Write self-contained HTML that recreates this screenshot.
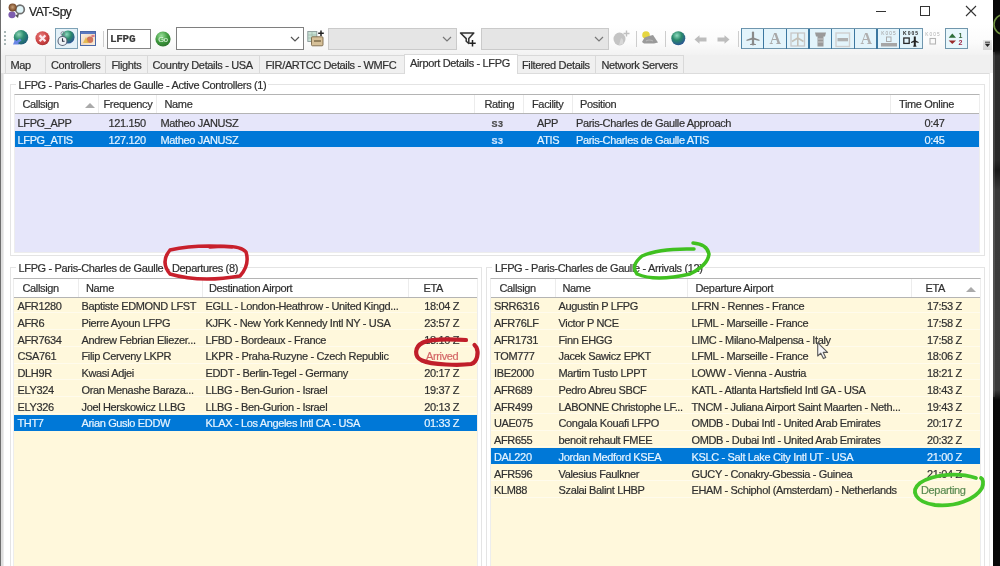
<!DOCTYPE html><html><head><meta charset="utf-8"><style>

*{box-sizing:border-box}
html,body{margin:0;padding:0}
body{width:1000px;height:566px;overflow:hidden;position:relative;background:#fff;font-family:"Liberation Sans", sans-serif;font-size:11px;color:#303030;letter-spacing:-0.35px}
.ab{position:absolute}
.t{position:absolute;white-space:nowrap;line-height:13px;-webkit-text-stroke:0.2px currentColor}
.tab{position:absolute;top:55px;height:18px;background:#f0f0f0;border:1px solid #d9d9d9;border-bottom:none}
.tabsel{position:absolute;top:54px;height:20px;background:#fff;border:1px solid #d9d9d9;border-bottom:none}
.grp{position:absolute;border:1px solid #e4e4e4}
.lv{position:absolute;border:1px solid #ededed;border-top-color:#b4b4b4;overflow:hidden}
.hdr{position:absolute;left:0;top:0;right:0;height:19px;background:#fff;border-bottom:1px solid #b4b4b4}
.sep{position:absolute;top:0;height:18px;width:1px;background:#ececec}
.row{position:absolute;left:0;right:0;height:16px}
.sel{background:#0078d7;color:#e6f4ff}
.tbtn{position:absolute;top:28px;width:23px;height:21px;border:2px solid #4a8ab3;background:#e3f2fa}

</style></head><body><div style="position:absolute;left:0;top:0;width:1000px;height:566px;overflow:hidden;filter:blur(0.4px)">
<div class="ab" style="left:0;top:0;width:1px;height:566px;background:#6e6e6e"></div><div class="ab" style="left:1px;top:24px;width:1.5px;height:542px;background:#dedede"></div>
<div class="ab" style="left:993px;top:0;width:7px;height:566px;background:linear-gradient(#070707 0,#0a0a0a 50px,#2c2c2c 56px,#2a2a2a 160px,#1a1a1a 170px,#3a3a3a 190px,#3c3c3c 390px,#0a0a0a 400px,#080808 566px)"></div>
<div class="ab" style="left:993px;top:52px;width:1.5px;height:345px;background:rgba(255,255,255,0.12)"></div>
<svg class="ab" style="left:993px;top:0" width="7" height="60" viewBox="0 0 7 60"><circle cx="11" cy="24.5" r="10" fill="none" stroke="#6f9040" stroke-width="1.6"/></svg>
<div class="t" style="left:29px;top:5px;font-size:12px;letter-spacing:-0.45px;color:#222;line-height:14px">VAT-Spy</div>
<svg class="ab" style="left:6px;top:2px" width="20" height="18" viewBox="0 0 20 18"><defs><radialGradient id="hd" cx="50%" cy="45%" r="55%"><stop offset="0" stop-color="#c8a078"/><stop offset="1" stop-color="#6a3a1a"/></radialGradient></defs><circle cx="14" cy="7.4" r="4.3" fill="#e0f4f8" stroke="#707070" stroke-width="1.7"/><path d="M9 13.5L13 11.5L12 16Z" fill="#555"/><ellipse cx="6" cy="12.8" rx="3.6" ry="3.4" fill="#7c5cae"/><circle cx="6.6" cy="5.6" r="4" fill="url(#hd)"/></svg>
<div class="ab" style="left:876px;top:11px;width:10px;height:1px;background:#333"></div>
<div class="ab" style="left:920px;top:6px;width:10px;height:10px;border:1px solid #333"></div>
<svg class="ab" style="left:965px;top:5px" width="12" height="12" viewBox="0 0 12 12"><path d="M1 1L11 11M11 1L1 11" stroke="#333" stroke-width="1.1"/></svg>
<div class="ab" style="left:1px;top:24px;width:992px;height:31px;background:linear-gradient(#fff,#fbfbfb 60%,#f2f2f2)"></div>
<div class="ab" style="left:3.5px;top:31px;width:2px;height:2px;background:#a9b6b6"></div>
<div class="ab" style="left:3.5px;top:35px;width:2px;height:2px;background:#a9b6b6"></div>
<div class="ab" style="left:3.5px;top:39px;width:2px;height:2px;background:#a9b6b6"></div>
<div class="ab" style="left:3.5px;top:43px;width:2px;height:2px;background:#a9b6b6"></div>
<svg class="ab" style="left:0;top:0" width="0" height="0"><defs>
<radialGradient id="gg" cx="35%" cy="30%" r="75%"><stop offset="0" stop-color="#8fd6b6"/><stop offset=".45" stop-color="#2f8f72"/><stop offset="1" stop-color="#1d5a78"/></radialGradient>
<radialGradient id="gb" cx="40%" cy="30%" r="75%"><stop offset="0" stop-color="#8fdcc0"/><stop offset=".45" stop-color="#2a8a6a"/><stop offset="1" stop-color="#2a4e98"/></radialGradient>
<radialGradient id="rg" cx="40%" cy="35%" r="70%"><stop offset="0" stop-color="#e88080"/><stop offset=".6" stop-color="#d04848"/><stop offset="1" stop-color="#a83030"/></radialGradient>
<radialGradient id="gn" cx="40%" cy="30%" r="75%"><stop offset="0" stop-color="#9ae09a"/><stop offset=".55" stop-color="#3f9a3f"/><stop offset="1" stop-color="#2a702a"/></radialGradient>
<linearGradient id="pic" x1="0" y1="0" x2="1" y2="1"><stop offset="0" stop-color="#fbf6ee"/><stop offset=".5" stop-color="#f0d8c0"/><stop offset="1" stop-color="#f8f0e0"/></linearGradient>
</defs></svg>
<svg class="ab" style="left:12px;top:29px" width="18" height="18" viewBox="0 0 18 18"><circle cx="9" cy="8.3" r="7.2" fill="url(#gg)"/><path d="M1 15.5L3 10.5L4.5 12L8 9.5L9.5 11.5L6 14L7.5 15.5Z" fill="#6a86e6"/></svg>
<svg class="ab" style="left:35px;top:31px" width="15" height="15" viewBox="0 0 15 15"><circle cx="7.5" cy="7.3" r="7" fill="url(#rg)"/><path d="M4.6 4.4L10.4 10.2M10.4 4.4L4.6 10.2" stroke="#fde8ec" stroke-width="2.2"/></svg>
<div class="ab" style="left:54.5px;top:28px;width:23px;height:21px;border:1.5px solid #7ea2b6;background:#e4f1f8"></div>
<svg class="ab" style="left:57px;top:30px" width="18" height="17" viewBox="0 0 18 17"><circle cx="11" cy="7" r="6.6" fill="url(#gb)"/><circle cx="5.5" cy="11" r="4.5" fill="#eef2f6" stroke="#5a6478" stroke-width="1.1"/><path d="M5.5 8.3V11.2H7.6" stroke="#2a3040" stroke-width="1.1" fill="none"/><circle cx="5.8" cy="3.5" r="1.8" fill="none" stroke="#7a8290" stroke-width=".9"/></svg>
<svg class="ab" style="left:80px;top:31px" width="16" height="15" viewBox="0 0 16 15"><rect x=".5" y=".5" width="15" height="14" fill="url(#pic)" stroke="#4a68a8"/><rect x="1" y="1" width="14" height="2" fill="#5a78c0"/><circle cx="10" cy="8.8" r="3.2" fill="#c85a40" opacity=".8"/><path d="M3 12L6 6L9 12Z" fill="#e0b030" opacity=".75"/><rect x="11.5" y="4" width="3" height="2" fill="#d04060" opacity=".6"/></svg>
<div class="ab" style="left:103px;top:31px;width:1px;height:16px;background:#cdcdcd"></div>
<div class="ab" style="left:636px;top:31px;width:1px;height:16px;background:#cdcdcd"></div>
<div class="ab" style="left:664.5px;top:31px;width:1px;height:16px;background:#cdcdcd"></div>
<div class="ab" style="left:738px;top:31px;width:1px;height:16px;background:#cdcdcd"></div>
<div class="ab" style="left:107px;top:29px;width:44px;height:20px;border:1.5px solid #858585;background:#fff"></div>
<div class="t" style="left:110px;top:33px;font-family:'Liberation Mono',monospace;font-weight:bold;font-size:11px;letter-spacing:-0.3px;color:#3a3a3a">LFPG</div>
<svg class="ab" style="left:155px;top:31px" width="16" height="16" viewBox="0 0 16 16"><circle cx="8" cy="8" r="7.6" fill="url(#gn)"/><text x="8" y="10.8" font-size="7.5" text-anchor="middle" fill="#f4fff4" font-family="Liberation Sans">Go</text></svg>
<div class="ab" style="left:176px;top:27px;width:128px;height:23px;border:1.5px solid #7f7f7f;background:#fff"></div>
<svg class="ab" style="left:290px;top:36px" width="10" height="6" viewBox="0 0 10 6"><path d="M1 1L5 5L9 1" stroke="#555" stroke-width="1.2" fill="none"/></svg>
<svg class="ab" style="left:307px;top:30px" width="17" height="17" viewBox="0 0 17 17"><rect x=".8" y="1.5" width="9" height="10" fill="#c8e0d4" stroke="#8a9a9a" stroke-width=".9"/><path d="M1 5H9.5M1 8H9.5M5 1.5V11.5" stroke="#9ab8a8" stroke-width=".7"/><rect x="4.5" y="6.8" width="11.5" height="9" rx="1" fill="#d6c098" stroke="#7a6848" stroke-width=".9"/><path d="M7 11H14" stroke="#6a5838" stroke-width="1.2"/><path d="M14 0.5V6M11.2 3.2H16.8" stroke="#222" stroke-width="1.5"/></svg>
<div class="ab" style="left:328px;top:27.5px;width:129px;height:22.5px;border:1.5px solid #cacaca;background:#e5e5e5"></div>
<svg class="ab" style="left:442px;top:36px" width="10" height="6" viewBox="0 0 10 6"><path d="M1 1L5 5L9 1" stroke="#787878" stroke-width="1.2" fill="none"/></svg>
<svg class="ab" style="left:459px;top:31px" width="17" height="16" viewBox="0 0 17 16"><path d="M1.5 2H14.8L9.8 7.6V12.5L7.2 10.2V7.6Z" fill="#f4f4f4" stroke="#303030" stroke-width="1.5" stroke-linejoin="round"/><path d="M13.5 9V15.5M10.3 12.2H16.7" stroke="#202020" stroke-width="1.5"/></svg>
<div class="ab" style="left:481px;top:27.5px;width:128px;height:22.5px;border:1.5px solid #cacaca;background:#e5e5e5"></div>
<svg class="ab" style="left:594px;top:36px" width="10" height="6" viewBox="0 0 10 6"><path d="M1 1L5 5L9 1" stroke="#787878" stroke-width="1.2" fill="none"/></svg>
<svg class="ab" style="left:612px;top:30px" width="19" height="17" viewBox="0 0 19 17"><ellipse cx="7.5" cy="9" rx="6" ry="6.5" fill="#c4c4c4"/><path d="M9 8Q12 9 11 14L7 15Z" fill="#d8d8d8"/><path d="M14.5 0.5V6.5M11.5 3.5H17.5" stroke="#c0c0c0" stroke-width="1.4"/></svg>
<svg class="ab" style="left:641px;top:30px" width="18" height="16" viewBox="0 0 18 16"><circle cx="5" cy="5" r="3.8" fill="#e6d640"/><path d="M3.5 7.5L8 6L12 5L17 12.5L13 13.5H3L1 12Z" fill="#9a9a9a"/><path d="M5 11Q8 9 12 11" stroke="#b8b8b8" stroke-width="1.2" fill="none"/></svg>
<svg class="ab" style="left:671px;top:31px" width="15" height="15" viewBox="0 0 15 15"><circle cx="7.3" cy="7.3" r="7" fill="url(#gb)"/></svg>
<svg class="ab" style="left:694px;top:35px" width="14" height="9" viewBox="0 0 14 9"><path d="M0.5 4.5L5.5 0.3V2.5H12.5V6.5H5.5V8.7Z" fill="#bdbdbd"/></svg>
<svg class="ab" style="left:717px;top:35px" width="13" height="9" viewBox="0 0 13 9"><path d="M12.5 4.5L7.5 0.3V2.5H0.5V6.5H7.5V8.7Z" fill="#bdbdbd"/></svg>
<div class="ab" style="left:741px;top:28px;width:181.5px;height:21px;border:1.3px solid #6f96ae;border-left-color:#4f86a8;background:#e3f4fb"></div>
<div class="ab" style="left:762.8px;top:28.5px;width:1.6px;height:20px;background:#3b77a0"></div>
<div class="ab" style="left:785.5999999999999px;top:28.5px;width:1.6px;height:20px;background:#3b77a0"></div>
<div class="ab" style="left:808.4px;top:28.5px;width:1.6px;height:20px;background:#3b77a0"></div>
<div class="ab" style="left:830.9px;top:28.5px;width:1.6px;height:20px;background:#3b77a0"></div>
<div class="ab" style="left:853.5px;top:28.5px;width:1.6px;height:20px;background:#3b77a0"></div>
<div class="ab" style="left:876.3px;top:28.5px;width:1.6px;height:20px;background:#3b77a0"></div>
<div class="ab" style="left:898.8px;top:28.5px;width:1.6px;height:20px;background:#3b77a0"></div>
<svg class="ab" style="left:741.5px;top:28.5px" width="22" height="20" viewBox="0 0 22 20"><path d="M11 3.5V15.5" stroke="#8a8a8a" stroke-width="2.2" stroke-linecap="round"/><path d="M4.5 10.8L11 8.3L17.5 10.8V12L11 10.6L4.5 12Z" fill="#8a8a8a"/><path d="M8 15.2L11 14.2L14 15.2V16H8Z" fill="#8a8a8a"/></svg>
<svg class="ab" style="left:764.3px;top:28.5px" width="22" height="20" viewBox="0 0 22 20"><text x="11" y="15.2" font-size="16" text-anchor="middle" fill="#a8a8a8" font-family="Liberation Serif" font-weight="bold">A</text></svg>
<svg class="ab" style="left:787px;top:28.5px" width="22" height="20" viewBox="0 0 22 20"><rect x="4" y="4" width="13.5" height="13" fill="none" stroke="#c8c8c8" stroke-width="1.3"/><path d="M10.8 4V17M5 12.5L10.8 9L16.5 12.5" stroke="#c4c0b8" stroke-width="1.6" fill="none"/></svg>
<svg class="ab" style="left:809.8px;top:28.5px" width="22" height="20" viewBox="0 0 22 20"><path d="M5 3.5H16L15 7.5H13.5V17.5H7.5V7.5H6Z" fill="#9a9a9a"/><path d="M8 10H13M8 13H13" stroke="#c8c8c8" stroke-width="1"/></svg>
<svg class="ab" style="left:832.4px;top:28.5px" width="22" height="20" viewBox="0 0 22 20"><rect x="4" y="4" width="13.5" height="13.5" fill="none" stroke="#cfcfcf" stroke-width="1.4"/><rect x="5.5" y="9" width="10.5" height="3.3" fill="#b0b0b0"/></svg>
<svg class="ab" style="left:855px;top:28.5px" width="22" height="20" viewBox="0 0 22 20"><text x="11" y="15.2" font-size="16" text-anchor="middle" fill="#b0b0b0" font-family="Liberation Serif" font-weight="bold">A</text></svg>
<svg class="ab" style="left:877.8px;top:28.5px" width="22" height="20" viewBox="0 0 22 20"><text x="11" y="6" font-size="4.8" text-anchor="middle" fill="#a0a0a0" font-family="Liberation Sans" letter-spacing="1.1">K005</text><rect x="8.5" y="8" width="4.5" height="4.5" fill="none" stroke="#aaa" stroke-width="1"/><rect x="3" y="14" width="16" height="3.5" fill="#a6a6a6"/></svg>
<svg class="ab" style="left:900.3px;top:28.5px" width="22" height="20" viewBox="0 0 22 20"><text x="11" y="6.2" font-size="5" text-anchor="middle" fill="#252525" font-family="Liberation Sans" font-weight="bold" letter-spacing="1">K005</text><rect x="3.8" y="9" width="5.4" height="5.4" fill="none" stroke="#2a2a2a" stroke-width="1.3"/><path d="M14.8 7.5V17.5" stroke="#222" stroke-width="2"/><path d="M11 13L14.8 11L18.6 13V14L14.8 13L11 14Z" fill="#222"/><path d="M13 17L14.8 16L16.6 17V17.6H13Z" fill="#222"/></svg>
<svg class="ab" style="left:922px;top:28.5px" width="22" height="20" viewBox="0 0 22 20"><text x="11" y="7" font-size="4.8" text-anchor="middle" fill="#b0b0b0" font-family="Liberation Sans" letter-spacing="1.1">K005</text><rect x="8" y="9.5" width="5.5" height="5.5" fill="none" stroke="#b4b4b4" stroke-width="1.1"/></svg>
<div class="ab" style="left:945px;top:28px;width:23px;height:21.3px;border:1.5px solid #7096ac;background:#e8f7fc"></div>
<svg class="ab" style="left:945px;top:28px" width="23" height="21" viewBox="0 0 23 21"><path d="M3.7 9.7L7.3 5.5L11 9.7Z" fill="#2e6e3a"/><path d="M3.7 12.5L7.3 16L11 12.5Z" fill="#9a2a2a"/><text x="15.2" y="9.8" font-size="7" text-anchor="middle" fill="#3a6a40" font-family="Liberation Sans" font-weight="bold">1</text><text x="15.2" y="17" font-size="7" text-anchor="middle" fill="#a02848" font-family="Liberation Sans" font-weight="bold">2</text></svg>
<div class="ab" style="left:983px;top:40px;width:9px;height:10px;background:linear-gradient(#e8e8e8,#d4d4d4)"></div>
<svg class="ab" style="left:983px;top:40px" width="9" height="10" viewBox="0 0 9 10"><path d="M2 2.2H7" stroke="#333" stroke-width="1"/><path d="M1.8 3.8H7.2L4.5 7Z" fill="#222"/></svg>
<div class="ab" style="left:1px;top:55px;width:992px;height:18px;background:#f0f0f0"></div>
<div class="tab" style="left:5px;width:41px"></div>
<div class="t" style="left:10.5px;top:59px">Map</div>
<div class="tab" style="left:45px;width:61px"></div>
<div class="t" style="left:51px;top:59px">Controllers</div>
<div class="tab" style="left:105px;width:42.5px"></div>
<div class="t" style="left:111.5px;top:59px">Flights</div>
<div class="tab" style="left:146.5px;width:113.5px"></div>
<div class="t" style="left:152.5px;top:59px">Country Details - USA</div>
<div class="tab" style="left:259px;width:146px"></div>
<div class="t" style="left:265.5px;top:59px">FIR/ARTCC Details - WMFC</div>
<div class="tab" style="left:517px;width:79px"></div>
<div class="t" style="left:522px;top:59px">Filtered Details</div>
<div class="tab" style="left:595px;width:89px"></div>
<div class="t" style="left:601.5px;top:59px">Network Servers</div>
<div class="ab" style="left:3px;top:73px;width:987px;height:500px;background:#fff;border:1px solid #ececec;border-top-color:#dcdcdc"></div>
<div class="tabsel" style="left:404px;width:114px"></div>
<div class="t" style="left:410px;top:57px">Airport Details - LFPG</div>
<div class="grp" style="left:10px;top:84px;width:975px;height:172px"></div>
<div class="t" style="left:15.5px;top:79px;background:#fff;padding:0 2px 0 3px">LFPG - Paris-Charles de Gaulle - Active Controllers (1)</div>
<div class="grp" style="left:10px;top:267px;width:472px;height:334px"></div>
<div class="t" style="left:15.5px;top:262px;background:#fff;padding:0 2px 0 3px">LFPG - Paris-Charles de Gaulle - Departures (8)</div>
<div class="grp" style="left:486px;top:267px;width:499px;height:334px"></div>
<div class="t" style="left:492px;top:262px;background:#fff;padding:0 2px 0 3px">LFPG - Paris-Charles de Gaulle - Arrivals (12)</div>
<div class="lv" style="left:14px;top:94px;width:966px;height:159px;background:#e6e6fa">
<div class="hdr">
<div class="t" style="left:7.5px;top:3.4px">Callsign</div>
<div class="sep" style="left:82.5px"></div>
<div class="t" style="left:88.5px;top:3.4px">Frequency</div>
<div class="sep" style="left:141px"></div>
<div class="t" style="left:149.5px;top:3.4px">Name</div>
<div class="sep" style="left:459px"></div>
<div class="t" style="left:469.5px;top:3.4px">Rating</div>
<div class="sep" style="left:508px"></div>
<div class="t" style="left:517px;top:3.4px">Facility</div>
<div class="sep" style="left:557px"></div>
<div class="t" style="left:565px;top:3.4px">Position</div>
<div class="sep" style="left:874.5px"></div>
<div class="t" style="left:884px;top:3.4px">Time Online</div>
<svg class="ab" style="left:70px;top:8px" width="10" height="5" viewBox="0 0 10 5"><path d="M0 5L5 0L10 5Z" fill="#aaa"/></svg>
</div>
<div class="row" style="top:19.00px;">
<div class="t" style="left:2.5px;top:2.8px;">LFPG_APP</div>
<div class="t" style="left:93.5px;top:2.8px;">121.150</div>
<div class="t" style="left:145.5px;top:2.8px;">Matheo JANUSZ</div>
<div class="t" style="left:476.5px;top:2.8px;font-size:9px;font-weight:bold;letter-spacing:0.6px;color:#4a4a4a;top:4.3px">S3</div>
<div class="t" style="left:522px;top:2.8px;">APP</div>
<div class="t" style="left:561px;top:2.8px;">Paris-Charles de Gaulle Approach</div>
<div class="t" style="left:909.5px;top:2.8px;">0:47</div>
</div>
<div class="row sel" style="top:35.75px;">
<div class="t" style="left:2.5px;top:2.8px;">LFPG_ATIS</div>
<div class="t" style="left:93.5px;top:2.8px;">127.120</div>
<div class="t" style="left:145.5px;top:2.8px;">Matheo JANUSZ</div>
<div class="t" style="left:476.5px;top:2.8px;font-size:9px;font-weight:bold;letter-spacing:0.6px;color:#cfe6ff;top:4.3px">S3</div>
<div class="t" style="left:522px;top:2.8px;">ATIS</div>
<div class="t" style="left:561px;top:2.8px;">Paris-Charles de Gaulle ATIS</div>
<div class="t" style="left:909.5px;top:2.8px;">0:45</div>
</div>
</div>
<div class="lv" style="left:13px;top:278px;width:465px;height:343px;background:#fff8dc">
<div class="hdr">
<div class="t" style="left:8.5px;top:3.4px">Callsign</div>
<div class="sep" style="left:63.5px"></div>
<div class="t" style="left:72px;top:3.4px">Name</div>
<div class="sep" style="left:187.5px"></div>
<div class="t" style="left:195px;top:3.4px">Destination Airport</div>
<div class="sep" style="left:393.5px"></div>
<div class="t" style="left:409.5px;top:3.4px">ETA</div>
</div>
<div class="row" style="top:18.40px;border-bottom:1px solid rgba(255,255,255,0.45);">
<div class="t" style="left:3.5px;top:2.8px;">AFR1280</div>
<div class="t" style="left:67.5px;top:2.8px;">Baptiste EDMOND LFST</div>
<div class="t" style="left:191.5px;top:2.8px;">EGLL - London-Heathrow - United Kingd...</div>
<div class="t" style="left:410.3px;top:2.8px;">18:04 Z</div>
</div>
<div class="row" style="top:35.15px;border-bottom:1px solid rgba(255,255,255,0.45);">
<div class="t" style="left:3.5px;top:2.8px;">AFR6</div>
<div class="t" style="left:67.5px;top:2.8px;">Pierre Ayoun LFPG</div>
<div class="t" style="left:191.5px;top:2.8px;">KJFK - New York Kennedy Intl NY - USA</div>
<div class="t" style="left:410.3px;top:2.8px;">23:57 Z</div>
</div>
<div class="row" style="top:51.90px;border-bottom:1px solid rgba(255,255,255,0.45);">
<div class="t" style="left:3.5px;top:2.8px;">AFR7634</div>
<div class="t" style="left:67.5px;top:2.8px;">Andrew Febrian Eliezer...</div>
<div class="t" style="left:191.5px;top:2.8px;">LFBD - Bordeaux - France</div>
<div class="t" style="left:410.3px;top:2.8px;">18:10 Z</div>
</div>
<div class="row" style="top:68.65px;border-bottom:1px solid rgba(255,255,255,0.45);">
<div class="t" style="left:3.5px;top:2.8px;">CSA761</div>
<div class="t" style="left:67.5px;top:2.8px;">Filip Cerveny LKPR</div>
<div class="t" style="left:191.5px;top:2.8px;">LKPR - Praha-Ruzyne - Czech Republic</div>
<div class="t" style="left:410.3px;top:2.8px;color:#d46868;left:412px">Arrived</div>
</div>
<div class="row" style="top:85.40px;border-bottom:1px solid rgba(255,255,255,0.45);">
<div class="t" style="left:3.5px;top:2.8px;">DLH9R</div>
<div class="t" style="left:67.5px;top:2.8px;">Kwasi Adjei</div>
<div class="t" style="left:191.5px;top:2.8px;">EDDT - Berlin-Tegel - Germany</div>
<div class="t" style="left:410.3px;top:2.8px;">20:17 Z</div>
</div>
<div class="row" style="top:102.15px;border-bottom:1px solid rgba(255,255,255,0.45);">
<div class="t" style="left:3.5px;top:2.8px;">ELY324</div>
<div class="t" style="left:67.5px;top:2.8px;">Oran Menashe Baraza...</div>
<div class="t" style="left:191.5px;top:2.8px;">LLBG - Ben-Gurion - Israel</div>
<div class="t" style="left:410.3px;top:2.8px;">19:37 Z</div>
</div>
<div class="row" style="top:118.90px;border-bottom:1px solid rgba(255,255,255,0.45);">
<div class="t" style="left:3.5px;top:2.8px;">ELY326</div>
<div class="t" style="left:67.5px;top:2.8px;">Joel Herskowicz LLBG</div>
<div class="t" style="left:191.5px;top:2.8px;">LLBG - Ben-Gurion - Israel</div>
<div class="t" style="left:410.3px;top:2.8px;">20:13 Z</div>
</div>
<div class="row sel" style="top:135.65px;">
<div class="t" style="left:3.5px;top:2.8px;">THT7</div>
<div class="t" style="left:67.5px;top:2.8px;">Arian Guslo EDDW</div>
<div class="t" style="left:191.5px;top:2.8px;">KLAX - Los Angeles Intl CA - USA</div>
<div class="t" style="left:410.3px;top:2.8px;">01:33 Z</div>
</div>
</div>
<div class="lv" style="left:490px;top:278px;width:491px;height:343px;background:#fff8dc">
<div class="hdr">
<div class="t" style="left:8.5px;top:3.4px">Callsign</div>
<div class="sep" style="left:63.5px"></div>
<div class="t" style="left:71.5px;top:3.4px">Name</div>
<div class="sep" style="left:196px"></div>
<div class="t" style="left:204.5px;top:3.4px">Departure Airport</div>
<div class="sep" style="left:420px"></div>
<div class="t" style="left:434.5px;top:3.4px">ETA</div>
<svg class="ab" style="left:475px;top:8px" width="10" height="5" viewBox="0 0 10 5"><path d="M0 5L5 0L10 5Z" fill="#aaa"/></svg>
</div>
<div class="row" style="top:18.40px;border-bottom:1px solid rgba(255,255,255,0.45);">
<div class="t" style="left:3px;top:2.8px;">SRR6316</div>
<div class="t" style="left:67.5px;top:2.8px;">Augustin P LFPG</div>
<div class="t" style="left:200.5px;top:2.8px;">LFRN - Rennes - France</div>
<div class="t" style="left:436px;top:2.8px;">17:53 Z</div>
</div>
<div class="row" style="top:35.15px;border-bottom:1px solid rgba(255,255,255,0.45);">
<div class="t" style="left:3px;top:2.8px;">AFR76LF</div>
<div class="t" style="left:67.5px;top:2.8px;">Victor P NCE</div>
<div class="t" style="left:200.5px;top:2.8px;">LFML - Marseille - France</div>
<div class="t" style="left:436px;top:2.8px;">17:58 Z</div>
</div>
<div class="row" style="top:51.90px;border-bottom:1px solid rgba(255,255,255,0.45);">
<div class="t" style="left:3px;top:2.8px;">AFR1731</div>
<div class="t" style="left:67.5px;top:2.8px;">Finn EHGG</div>
<div class="t" style="left:200.5px;top:2.8px;">LIMC - Milano-Malpensa - Italy</div>
<div class="t" style="left:436px;top:2.8px;">17:58 Z</div>
</div>
<div class="row" style="top:68.65px;border-bottom:1px solid rgba(255,255,255,0.45);">
<div class="t" style="left:3px;top:2.8px;">TOM777</div>
<div class="t" style="left:67.5px;top:2.8px;">Jacek Sawicz EPKT</div>
<div class="t" style="left:200.5px;top:2.8px;">LFML - Marseille - France</div>
<div class="t" style="left:436px;top:2.8px;">18:06 Z</div>
</div>
<div class="row" style="top:85.40px;border-bottom:1px solid rgba(255,255,255,0.45);">
<div class="t" style="left:3px;top:2.8px;">IBE2000</div>
<div class="t" style="left:67.5px;top:2.8px;">Martim Tusto LPPT</div>
<div class="t" style="left:200.5px;top:2.8px;">LOWW - Vienna - Austria</div>
<div class="t" style="left:436px;top:2.8px;">18:21 Z</div>
</div>
<div class="row" style="top:102.15px;border-bottom:1px solid rgba(255,255,255,0.45);">
<div class="t" style="left:3px;top:2.8px;">AFR689</div>
<div class="t" style="left:67.5px;top:2.8px;">Pedro Abreu SBCF</div>
<div class="t" style="left:200.5px;top:2.8px;">KATL - Atlanta Hartsfield Intl GA - USA</div>
<div class="t" style="left:436px;top:2.8px;">18:43 Z</div>
</div>
<div class="row" style="top:118.90px;border-bottom:1px solid rgba(255,255,255,0.45);">
<div class="t" style="left:3px;top:2.8px;">AFR499</div>
<div class="t" style="left:67.5px;top:2.8px;">LABONNE Christophe LF...</div>
<div class="t" style="left:200.5px;top:2.8px;">TNCM - Juliana Airport Saint Maarten - Neth...</div>
<div class="t" style="left:436px;top:2.8px;">19:43 Z</div>
</div>
<div class="row" style="top:135.65px;border-bottom:1px solid rgba(255,255,255,0.45);">
<div class="t" style="left:3px;top:2.8px;">UAE075</div>
<div class="t" style="left:67.5px;top:2.8px;">Congala Kouafi LFPO</div>
<div class="t" style="left:200.5px;top:2.8px;">OMDB - Dubai Intl - United Arab Emirates</div>
<div class="t" style="left:436px;top:2.8px;">20:17 Z</div>
</div>
<div class="row" style="top:152.40px;border-bottom:1px solid rgba(255,255,255,0.45);">
<div class="t" style="left:3px;top:2.8px;">AFR655</div>
<div class="t" style="left:67.5px;top:2.8px;">benoit rehault FMEE</div>
<div class="t" style="left:200.5px;top:2.8px;">OMDB - Dubai Intl - United Arab Emirates</div>
<div class="t" style="left:436px;top:2.8px;">20:32 Z</div>
</div>
<div class="row sel" style="top:169.15px;">
<div class="t" style="left:3px;top:2.8px;">DAL220</div>
<div class="t" style="left:67.5px;top:2.8px;">Jordan Medford KSEA</div>
<div class="t" style="left:200.5px;top:2.8px;">KSLC - Salt Lake City Intl UT - USA</div>
<div class="t" style="left:436px;top:2.8px;">21:00 Z</div>
</div>
<div class="row" style="top:185.90px;border-bottom:1px solid rgba(255,255,255,0.45);">
<div class="t" style="left:3px;top:2.8px;">AFR596</div>
<div class="t" style="left:67.5px;top:2.8px;">Valesius Faulkner</div>
<div class="t" style="left:200.5px;top:2.8px;">GUCY - Conakry-Gbessia - Guinea</div>
<div class="t" style="left:436px;top:2.8px;">21:04 Z</div>
</div>
<div class="row" style="top:202.65px;border-bottom:1px solid rgba(255,255,255,0.45);">
<div class="t" style="left:3px;top:2.8px;">KLM88</div>
<div class="t" style="left:67.5px;top:2.8px;">Szalai Balint LHBP</div>
<div class="t" style="left:200.5px;top:2.8px;">EHAM - Schiphol (Amsterdam) - Netherlands</div>
<div class="t" style="left:436px;top:2.8px;color:#5a8a52;left:430px">Departing</div>
</div>
</div>
<svg class="ab" style="left:816.5px;top:341.5px" width="13" height="18" viewBox="0 0 13 18"><path d="M0.7 0.7V14L3.8 11.2L6.4 16.6L8.7 15.6L6.2 10.4H10.6Z" fill="#f6f6f6" stroke="#5a5a5a" stroke-width="1.1" stroke-linejoin="round"/></svg>
<svg class="ab" style="left:0;top:0" width="1000" height="566" viewBox="0 0 1000 566">
<path d="M232 247Q196 244 170 250Q160 262 170 274Q200 283 240 276Q250 265 246 252Q240 244 210 247" stroke="#c8202c" stroke-width="3.5" fill="none" stroke-linecap="round"/>
<path d="M466 340C450 339 432 338.5 423 342.5C414 347 414 357 422 360.5C432 365 460 365.5 471 364C478 362 478.5 352 476.5 347.5L474.5 345" stroke="#c01e2a" stroke-width="4.2" fill="none" stroke-linecap="round"/>
<path d="M694 249Q660 248 642 256Q630 266 637 274Q655 282 690 274Q708 265 709 254Q707 244 693 243" stroke="#40c020" stroke-width="3.5" fill="none" stroke-linecap="round"/>
<path d="M976 478C960 473 935 473 920 483C910 491 915 502 935 505C955 507 975 500 982 488C984 483 983 479 981 478" stroke="#44c628" stroke-width="3.8" fill="none" stroke-linecap="round"/>
</svg>
</div></body></html>
